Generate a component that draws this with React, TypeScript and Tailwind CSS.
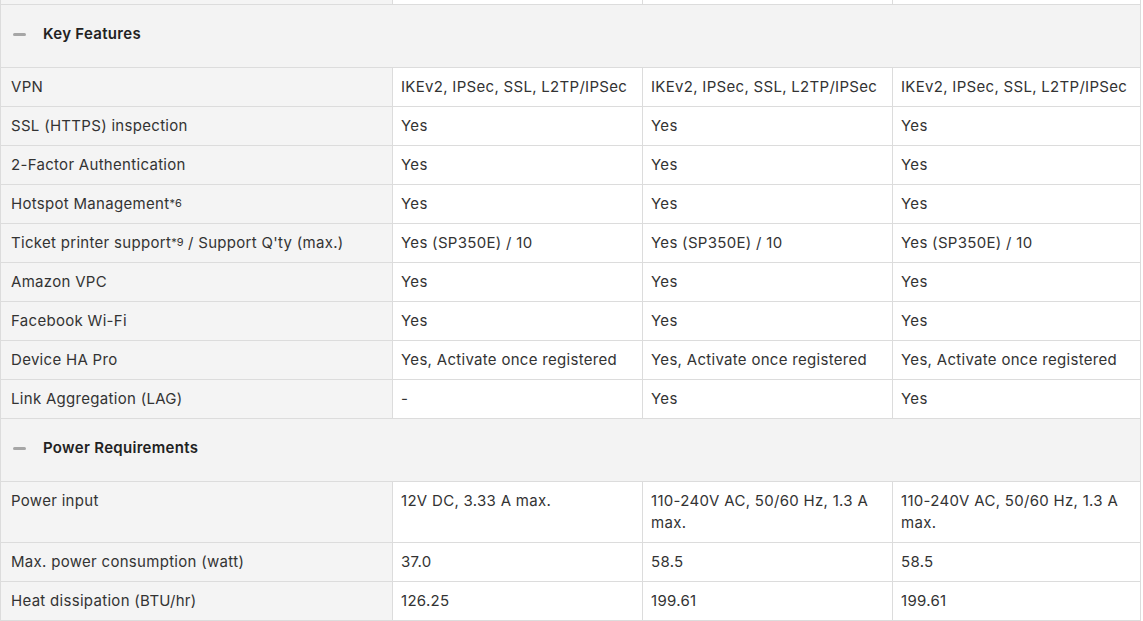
const cols = ["w-[392px]", "w-[250px]", "w-[250px]", "w-[248px]"];

type Row = { label: React.ReactNode; values: string[] };

const Sup = ({ n }: { n: string }) => (
  <sup className="text-[11px] relative -top-[2px] tracking-normal">{n}</sup>
);

const keyFeatures: Row[] = [
  { label: "VPN", values: Array(3).fill("IKEv2, IPSec, SSL, L2TP/IPSec") },
  { label: "SSL (HTTPS) inspection", values: ["Yes", "Yes", "Yes"] },
  { label: "2-Factor Authentication", values: ["Yes", "Yes", "Yes"] },
  {
    label: (
      <>
        Hotspot Management<Sup n="*6" />
      </>
    ),
    values: ["Yes", "Yes", "Yes"],
  },
  {
    label: (
      <>
        Ticket printer support<Sup n="*9" /> / Support Q'ty (max.)
      </>
    ),
    values: Array(3).fill("Yes (SP350E) / 10"),
  },
  { label: "Amazon VPC", values: ["Yes", "Yes", "Yes"] },
  { label: "Facebook Wi-Fi", values: ["Yes", "Yes", "Yes"] },
  { label: "Device HA Pro", values: Array(3).fill("Yes, Activate once registered") },
  { label: "Link Aggregation (LAG)", values: ["-", "Yes", "Yes"] },
];

const power: Row[] = [
  {
    label: "Power input",
    values: ["12V DC, 3.33 A max.", "110-240V AC, 50/60 Hz, 1.3 A max.", "110-240V AC, 50/60 Hz, 1.3 A max."],
  },
  { label: "Max. power consumption (watt)", values: ["37.0", "58.5", "58.5"] },
  { label: "Heat dissipation (BTU/hr)", values: ["126.25", "199.61", "199.61"] },
];

function SectionHeader({ title }: { title: string }) {
  return (
    <tr>
      <td colSpan={4} className="h-[63px] bg-[#f3f3f3] border border-[#dcdcdc] px-3 pb-[3px] align-middle">
        <div className="flex items-center gap-[17px]">
          <span className="block w-[13px] h-[3px] bg-[#a6a6a6] rounded-sm" />
          <span className="text-[15px] font-semibold tracking-[0.3px] text-[#222]">{title}</span>
        </div>
      </td>
    </tr>
  );
}

function Rows({ rows }: { rows: Row[] }) {
  return (
    <>
      {rows.map((r, i) => (
        <tr key={i}>
          <td className="bg-[#f4f4f4] border border-[#dcdcdc] px-[10px] py-2 align-top">{r.label}</td>
          {r.values.map((v, j) => (
            <td key={j} className="bg-white border border-[#dcdcdc] pl-[8px] pr-2 py-2 align-top">
              {v}
            </td>
          ))}
        </tr>
      ))}
    </>
  );
}

export default function App() {
  return (
    <div className="bg-white w-[1143px] h-[621px] overflow-hidden">
      <table
        className="table-fixed border-collapse w-[1140px] text-[15px] leading-[22px] tracking-[0.3px] text-[#333]"
        style={{ fontFamily: "Inter, 'Noto Sans', sans-serif" }}
      >
        <colgroup>
          {cols.map((c, i) => (
            <col key={i} className={c} />
          ))}
        </colgroup>
        <tbody>
          <tr>
            <td className="h-[4px] p-0 bg-[#f4f4f4] border border-t-0 border-[#dcdcdc]" />
            <td className="h-[4px] p-0 border border-t-0 border-[#dcdcdc]" />
            <td className="h-[4px] p-0 border border-t-0 border-[#dcdcdc]" />
            <td className="h-[4px] p-0 border border-t-0 border-[#dcdcdc]" />
          </tr>
          <SectionHeader title="Key Features" />
          <Rows rows={keyFeatures} />
          <SectionHeader title="Power Requirements" />
          <Rows rows={power} />
        </tbody>
      </table>
    </div>
  );
}
